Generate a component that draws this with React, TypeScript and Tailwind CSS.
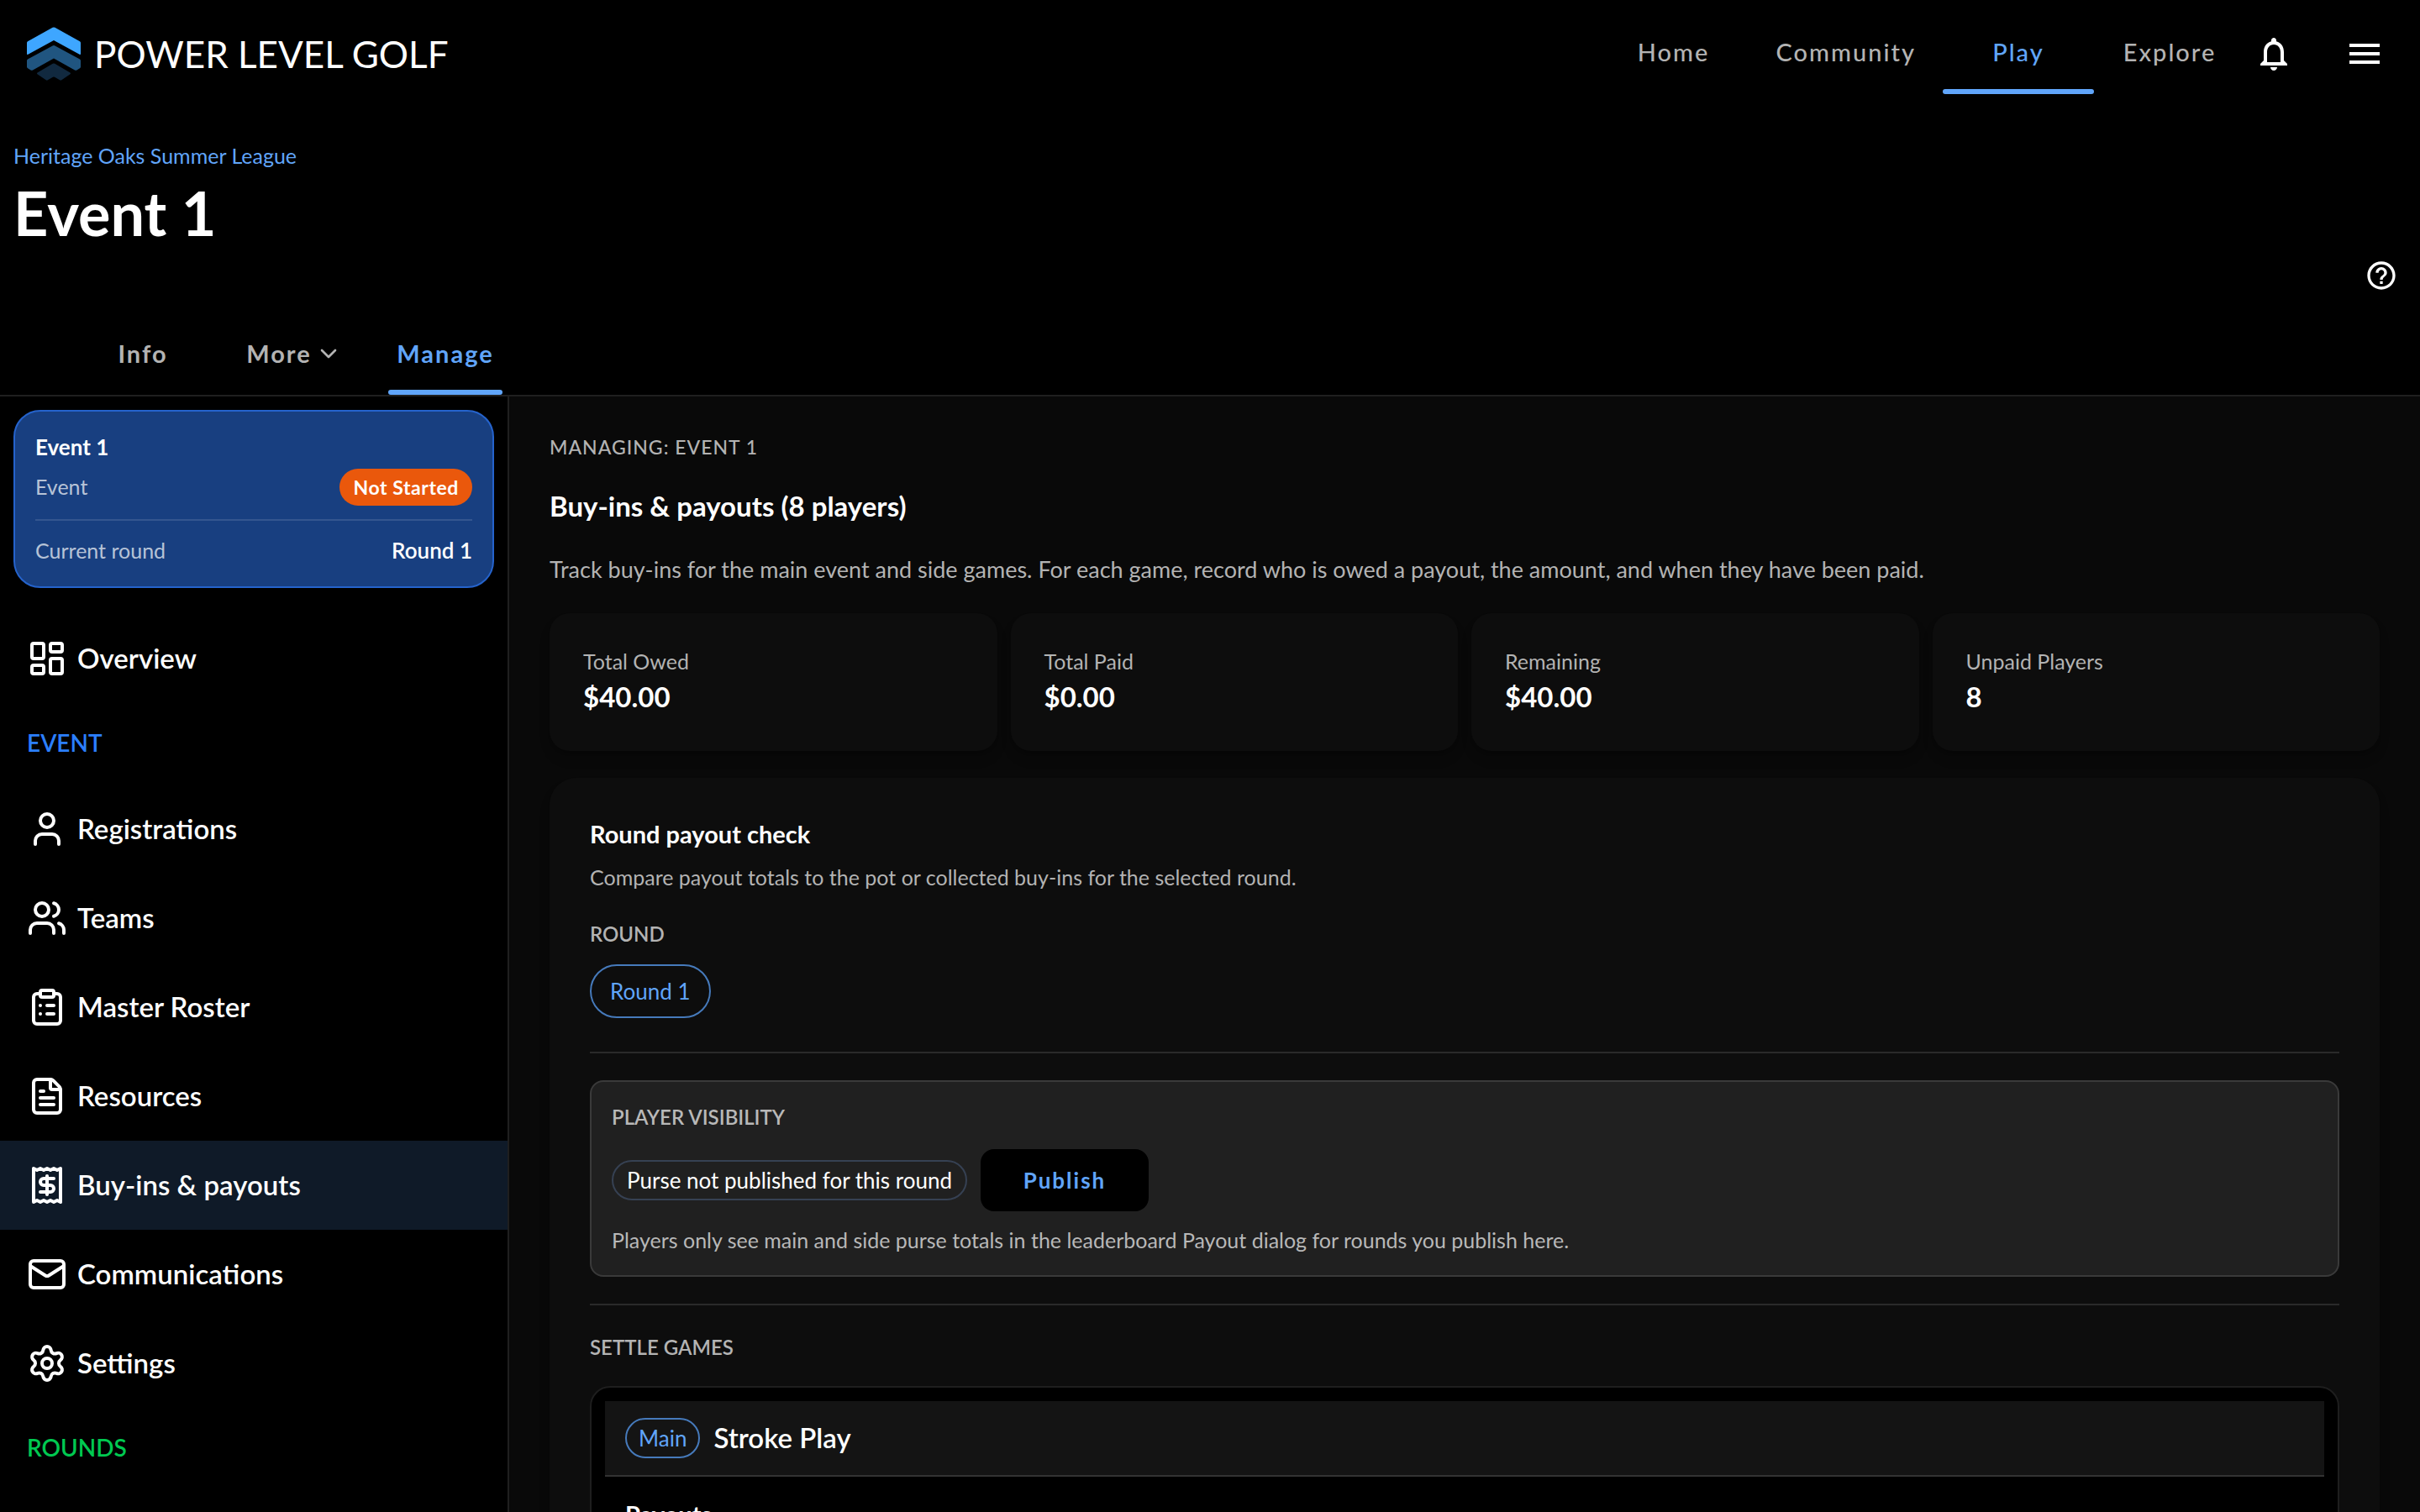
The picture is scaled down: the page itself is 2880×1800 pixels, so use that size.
import React from 'react';
import {
  ChevronDown,
  ClipboardList,
  FileText,
  LayoutDashboard,
  Mail,
  Receipt,
  Settings,
  User,
  Users,
} from 'lucide-react';
import { MdHelpOutline, MdMenu, MdNotificationsNone } from 'react-icons/md';

const topLinks = ['Home', 'Community', 'Play', 'Explore'];

const eventLinks = [
  { label: 'Registrations', icon: User },
  { label: 'Teams', icon: Users },
  { label: 'Master Roster', icon: ClipboardList },
  { label: 'Resources', icon: FileText },
  { label: 'Buy-ins & payouts', icon: Receipt },
  { label: 'Communications', icon: Mail },
  { label: 'Settings', icon: Settings },
];

const stats = [
  { label: 'Total Owed', value: '$40.00' },
  { label: 'Total Paid', value: '$0.00' },
  { label: 'Remaining', value: '$40.00' },
  { label: 'Unpaid Players', value: '8' },
];

const Logo = () => (
  <a href="#" className="flex items-center gap-4">
    <svg viewBox="0 0 64 64" className="size-16" aria-hidden="true">
      <path
        d="M30.6 .8q1.4-.8 2.8 0L63 17.2q1 .6 1 1.8V32q0 1.6-1.4 .8L32 16 1.4 32.8Q0 33.6 0 32V19q0-1.2 1-1.8Z"
        fill="#3ea6ff"
      />
      <path
        d="M30.6 22.4q1.4-.8 2.8 0L63 38.4q1 .6 1 1.8v7.3q0 1.2-1 1.8l-3.6 2.2q-1.2 .7-2.4 0L32 37.5 7 51.5q-1.2 .7-2.4 0L1 49.3q-1-.6-1-1.8v-7.3q0-1.2 1-1.8Z"
        fill="#205580"
      />
      <path
        d="M30.8 43.7q1.2-.6 2.4 0L51.5 54.6q1.2 .8 .1 1.6L41.3 63.3q-1.1 .7-2.2 0L33 59.8q-1-.5-2 0l-6.1 3.5q-1.1 .7-2.2 0L12.4 56.2q-1.1-.8 .1-1.6Z"
        fill="#11293f"
      />
    </svg>
    <span className="text-[44px] leading-[62px]">POWER LEVEL GOLF</span>
  </a>
);

const TopBar = () => (
  <header className="flex h-32 items-center px-8">
    <Logo />
    <nav className="ml-auto flex h-full items-start">
      {topLinks.map((label) => (
        <a
          key={label}
          href="#"
          className={`relative mt-3 flex h-[100px] min-w-[180px] items-center justify-center px-8 text-[29px] font-medium tracking-[2px] ${
            label === 'Play' ? 'text-[#60a5fa]' : 'text-[#b3b3b3]'
          }`}
        >
          {label}
          {label === 'Play' && (
            <span className="absolute inset-x-0 bottom-0 h-1.5 rounded-sm bg-[#60a5fa]" />
          )}
        </a>
      ))}
    </nav>
    <div className="flex gap-10">
      <button aria-label="Notifications" className="p-2.5">
        <MdNotificationsNone className="size-12" />
      </button>
      <button aria-label="Menu" className="p-2.5">
        <MdMenu className="size-12" />
      </button>
    </div>
  </header>
);

const tabClass =
  'relative flex h-[98px] w-[180px] items-center justify-center gap-1 text-[29px] font-bold tracking-[2px]';

const EventHeader = () => (
  <div className="border-b-2 border-[#1f1f1f] pt-10">
    <div className="px-4">
      <a href="#" className="block text-[25px] leading-[34px] text-[#60a5fa]">
        Heritage Oaks Summer League
      </a>
      <h1 className="mt-2 text-[72px] font-bold leading-[86px]">Event 1</h1>
    </div>
    <div className="mt-1 flex justify-end pr-[18px]">
      <button aria-label="Help" className="p-2">
        <MdHelpOutline className="size-10" />
      </button>
    </div>
    <div className="mt-4 flex pl-20">
      <button className={`${tabClass} text-[#b3b3b3]`}>Info</button>
      <button className={`${tabClass} text-[#b3b3b3]`}>
        More
        <ChevronDown className="size-8" />
      </button>
      <button className={`${tabClass} text-[#60a5fa]`}>
        Manage
        <span className="absolute inset-x-[22px] bottom-0 h-1.5 rounded-sm bg-[#60a5fa]" />
      </button>
    </div>
  </div>
);

const NavItem = ({ label, icon: Icon, active = false }) => (
  <a
    href="#"
    className={`flex h-[106px] items-center gap-3 pl-8 text-[33px] font-semibold ${active ? 'bg-[#0f1a28]' : ''}`}
  >
    <Icon className="size-12" />
    {label}
  </a>
);

const Sidebar = () => (
  <aside className="w-[606px] shrink-0 overflow-hidden border-r-2 border-[#1f1f1f] pt-4">
    <div className="mx-4 rounded-[32px] border-2 border-[#2563cc] bg-[#183f80] p-6">
      <div className="text-[26px] font-bold leading-9">Event 1</div>
      <div className="mt-2 flex h-11 items-center justify-between">
        <span className="text-[25px] text-white/70">Event</span>
        <span className="flex h-11 items-center rounded-full bg-[#ea580c] px-4 text-[23px] font-bold tracking-wide">
          Not Started
        </span>
      </div>
      <div className="mt-4 flex justify-between border-t-2 border-white/12 pt-4 leading-[38px]">
        <span className="text-[25px] text-white/70">Current round</span>
        <span className="text-[26px] font-semibold">Round 1</span>
      </div>
    </div>

    <nav className="mt-[31px]">
      <NavItem label="Overview" icon={LayoutDashboard} />
      <h2 className="pl-8 pt-[26px] pb-[29px] text-[28px] font-semibold leading-[42px] text-[#2b7fff]">EVENT</h2>
      {eventLinks.map((link) => (
        <NavItem key={link.label} {...link} active={link.label === 'Buy-ins & payouts'} />
      ))}
      <h2 className="pl-8 pt-[26px] pb-[29px] text-[28px] font-semibold leading-[42px] text-[#00c951]">ROUNDS</h2>
    </nav>
  </aside>
);

const PayoutCheck = () => (
  <section className="mt-8 rounded-[32px] bg-[#0d0d0d] p-12 shadow-lg shadow-black/20">
    <h3 className="text-[29px] font-bold leading-[38px]">Round payout check</h3>
    <p className="mt-3.5 text-[25px] leading-9 text-[#b3b3b3]">
      Compare payout totals to the pot or collected buy-ins for the selected round.
    </p>

    <div className="mt-8 text-[24px] font-semibold leading-9 text-[#b3b3b3]">ROUND</div>
    <button className="mt-[18px] flex h-16 items-center rounded-full border-2 border-[#467abb] px-[22px] text-[26px] text-[#60a5fa]">
      Round 1
    </button>

    <hr className="mt-10 border-t-2 border-[#2a2a2a]" />

    <div className="mt-8 rounded-2xl border-2 border-[#3a3a3a] bg-[#202020] p-6 text-[#b8b8b8]">
      <div className="text-[24px] font-semibold leading-9">PLAYER VISIBILITY</div>
      <div className="mt-5 flex items-center gap-4">
        <span className="flex h-12 items-center rounded-full border-2 border-[#364153] px-4 text-[26px] text-white">
          Purse not published for this round
        </span>
        <button className="h-[74px] w-[200px] rounded-2xl bg-black text-[26px] font-bold tracking-[2px] text-[#60a5fa]">
          Publish
        </button>
      </div>
      <p className="mt-4 text-[25px] leading-9">
        Players only see main and side purse totals in the leaderboard Payout dialog for rounds you publish here.
      </p>
    </div>

    <hr className="mt-8 border-t-2 border-[#2a2a2a]" />

    <div className="mt-8 text-[24px] font-semibold leading-9 text-[#b3b3b3]">SETTLE GAMES</div>
    <div className="mt-7 rounded-3xl border-2 border-[#1e1e1e] bg-black p-4">
      <div className="flex h-[90px] items-center gap-4 border-b-2 border-[#333333] bg-[#141414] px-6">
        <span className="flex h-12 items-center rounded-full border-2 border-[#467abb] px-3.5 text-[26px] text-[#60a5fa]">
          Main
        </span>
        <span className="text-[33px] font-semibold">Stroke Play</span>
      </div>
      <div className="p-6">
        <h4 className="text-[29px] font-bold leading-[42px]">Payouts</h4>
      </div>
    </div>
  </section>
);

const App = () => (
  <div className="flex h-screen flex-col overflow-hidden bg-black font-['Lato','Open_Sans',sans-serif] text-white">
    <TopBar />
    <EventHeader />
    <div className="flex min-h-0 flex-1">
      <Sidebar />
      <main className="min-w-0 flex-1 overflow-hidden bg-[#090909] px-12 pt-11">
        <div className="text-[23px] font-medium leading-8 tracking-[1px] text-[#b3b3b3]">MANAGING: EVENT 1</div>
        <h2 className="mt-[30px] text-[33px] font-bold leading-[48px]">Buy-ins & payouts (8 players)</h2>
        <p className="mt-8 text-[27px] leading-10 text-[#b3b3b3]">
          Track buy-ins for the main event and side games. For each game, record who is owed a payout, the amount, and
          when they have been paid.
        </p>

        <div className="mt-8 grid grid-cols-4 gap-4">
          {stats.map(({ label, value }) => (
            <div key={label} className="rounded-3xl bg-[#0d0d0d] p-10 shadow-lg shadow-black/20">
              <div className="text-[25px] leading-[34px] text-[#b3b3b3]">{label}</div>
              <div className="text-[33px] font-bold leading-[50px]">{value}</div>
            </div>
          ))}
        </div>

        <PayoutCheck />
      </main>
    </div>
  </div>
);

export default App;
